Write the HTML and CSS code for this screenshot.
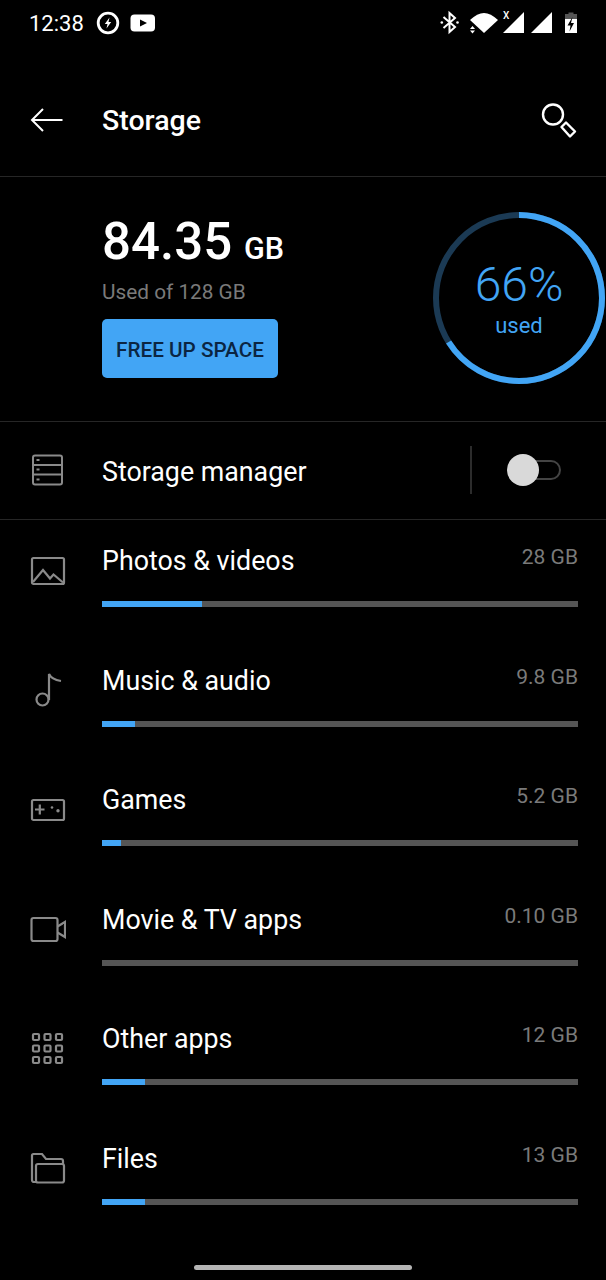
FILE: index.html
```html
<!DOCTYPE html>
<html lang="en">
<head>
    <meta charset="UTF-8">
    <meta name="viewport" content="width=device-width, initial-scale=1.0">
    <title>Storage</title>
    <link rel="stylesheet" href="styles.css">
</head>
<body>
    <div class="screen">
        <div class="statusbar">
            <div class="status-left">
                <span class="clock">12:38</span>
                <svg class="sicon" width="24" height="24" viewBox="0 0 24 24">
                    <circle cx="12" cy="12" r="9.800" fill="none" stroke="#fff" stroke-width="2.800"/>
                    <path d="M13.500 6.500 8.800 13h2.700l-1 4.500 4.700-6.500h-2.700z" fill="#fff"/>
                </svg>
                <svg class="sicon" width="26" height="18" viewBox="0 0 26 18">
                    <rect x="0.500" y="0.500" width="24.500" height="17" rx="4" fill="#fff"/>
                    <path d="M10 5.500 17 9l-7 3.500z" fill="#000"/>
                </svg>
            </div>
            <div class="status-right">
                <svg width="140" height="46" viewBox="0 0 140 46">
                    <path d="M3.500 17 15 27l-5.500 5V13l5.500 5L3.500 28" fill="none" stroke="#fff" stroke-width="2"/>
                    <circle cx="1.800" cy="22.500" r="1.300" fill="#fff"/>
                    <circle cx="17.500" cy="22.500" r="1.300" fill="#fff"/>
                    <path d="M30 20C35 15.500 39.500 13 44 13S53 15.500 58 20L44 33z" fill="#fff"/>
                    <path d="M30 29l2.500 -3 2.500 3zM30 30.500l2.500 3 2.500-3z" fill="#fff"/>
                    <path d="M63 33 84 12v21z" fill="#fff"/>
                    <path d="M91 33 112 12v21z" fill="#fff"/>
                    <rect x="125" y="14" width="12" height="19" fill="#fff"/>
                    <rect x="125" y="14" width="12" height="5" fill="#555"/>
                    <rect x="128.500" y="12.500" width="5" height="2" fill="#555"/>
                    <path d="M132.500 17 127.500 25.500h3l-1 6 4.500-8.500h-3l1.500-6z" fill="#000"/>
                </svg>
                <span class="mobile-x">X</span>
            </div>
        </div>

        <div class="toolbar">
            <svg class="back" width="34" height="26" viewBox="0 0 34 26">
                <path d="M32.500 13H2M13 2 2 13l11 11" fill="none" stroke="#fff" stroke-width="2"/>
            </svg>
            <h1 class="title">Storage</h1>
            <svg class="search" width="36" height="36" viewBox="0 0 36 36">
                <circle cx="12" cy="11.500" r="10" fill="none" stroke="#fff" stroke-width="2.400"/>
                <path d="M20.500 24 25 19.500 34 28.500 29 33.500z" fill="none" stroke="#fff" stroke-width="2.400" stroke-linejoin="round"/>
            </svg>
        </div>

        <div class="summary">
            <div class="summary-text">
                <div class="used"><span class="used-num">84.35</span> <span class="used-unit">GB</span></div>
                <div class="used-of">Used of 128 GB</div>
                <div class="free-btn">FREE UP SPACE</div>
            </div>
            <div class="ring">
                <svg width="174" height="174" viewBox="0 0 174 174">
                    <circle cx="87" cy="87" r="83" fill="none" stroke="#1b3a54" stroke-width="6"/>
                    <circle cx="87" cy="87" r="83" fill="none" stroke="#42a5f5" stroke-width="6" stroke-dasharray="344.200 521.500" transform="rotate(-90 87 87)"/>
                </svg>
                <div class="ring-label">
                    <div class="pct">66%</div>
                    <div class="pct-used">used</div>
                </div>
            </div>
        </div>

        <div class="manager">
            <svg class="icon" width="36" height="36" viewBox="0 0 36 36">
                <rect x="3" y="3.500" width="29" height="29" rx="2" fill="none" stroke="#8a8a8a" stroke-width="2"/>
                <path d="M3 13h29M3 22.500h29" stroke="#8a8a8a" stroke-width="2"/>
                <path d="M6.500 8h3M6.500 17.500h3M6.500 27.500h3" stroke="#8a8a8a" stroke-width="2"/>
            </svg>
            <span class="manager-label">Storage manager</span>
            <div class="switch-wrap">
                <div class="switch"><div class="knob"></div></div>
            </div>
        </div>

        <div class="row">
            <svg class="icon" width="36" height="36" viewBox="0 0 36 36">
                <rect x="2" y="5" width="32" height="26" rx="1.500" fill="none" stroke="#8a8a8a" stroke-width="2.200"/>
                <path d="M3 29 13 17l7 8.500 3.500-4 9.500 8" fill="none" stroke="#8a8a8a" stroke-width="2.200"/>
            </svg>
            <div class="row-main">
                <div class="row-head"><span class="row-name">Photos &amp; videos</span><span class="row-size">28 GB</span></div>
                <div class="bar"><div class="bar-fill" style="width: 100px"></div></div>
            </div>
        </div>

        <div class="row">
            <svg class="icon" width="36" height="36" viewBox="0 0 36 36">
                <circle cx="12.500" cy="26.500" r="6" fill="none" stroke="#8a8a8a" stroke-width="2.200"/>
                <path d="M19 27V1C20.500 4.500 25 7 31 8" fill="none" stroke="#8a8a8a" stroke-width="2.200"/>
            </svg>
            <div class="row-main">
                <div class="row-head"><span class="row-name">Music &amp; audio</span><span class="row-size">9.8 GB</span></div>
                <div class="bar"><div class="bar-fill" style="width: 33px"></div></div>
            </div>
        </div>

        <div class="row">
            <svg class="icon" width="36" height="36" viewBox="0 0 36 36">
                <rect x="2" y="8" width="32" height="20" rx="1.500" fill="none" stroke="#8a8a8a" stroke-width="2.200"/>
                <path d="M5 17.500h9.500M9.800 12.500v10" stroke="#8a8a8a" stroke-width="2.200"/>
                <circle cx="22" cy="15.500" r="1.300" fill="#8a8a8a"/>
                <circle cx="28" cy="18.700" r="1.700" fill="#8a8a8a"/>
            </svg>
            <div class="row-main">
                <div class="row-head"><span class="row-name">Games</span><span class="row-size">5.2 GB</span></div>
                <div class="bar"><div class="bar-fill" style="width: 19px"></div></div>
            </div>
        </div>

        <div class="row">
            <svg class="icon" width="36" height="36" viewBox="0 0 36 36">
                <rect x="1.500" y="6" width="26" height="23" rx="2" fill="none" stroke="#8a8a8a" stroke-width="2.200"/>
                <path d="M27.500 14.500 35 10v15l-7.500-4.500" fill="none" stroke="#8a8a8a" stroke-width="2.200"/>
            </svg>
            <div class="row-main">
                <div class="row-head"><span class="row-name">Movie &amp; TV apps</span><span class="row-size">0.10 GB</span></div>
                <div class="bar"></div>
            </div>
        </div>

        <div class="row">
            <svg class="icon" width="36" height="36" viewBox="0 0 36 36">
                <g fill="none" stroke="#8a8a8a" stroke-width="2.200">
                    <rect x="3" y="3" width="6" height="6" rx="1"/><rect x="14.500" y="3" width="6" height="6" rx="1"/><rect x="26" y="3" width="6" height="6" rx="1"/>
                    <rect x="3" y="14.500" width="6" height="6" rx="1"/><rect x="14.500" y="14.500" width="6" height="6" rx="1"/><rect x="26" y="14.500" width="6" height="6" rx="1"/>
                    <rect x="3" y="26" width="6" height="6" rx="1"/><rect x="14.500" y="26" width="6" height="6" rx="1"/><rect x="26" y="26" width="6" height="6" rx="1"/>
                </g>
            </svg>
            <div class="row-main">
                <div class="row-head"><span class="row-name">Other apps</span><span class="row-size">12 GB</span></div>
                <div class="bar"><div class="bar-fill" style="width: 43px"></div></div>
            </div>
        </div>

        <div class="row">
            <svg class="icon" width="36" height="36" viewBox="0 0 36 36">
                <path d="M6 31H4a2 2 0 0 1-2-2V4.500A1.500 1.500 0 0 1 3.500 3H12l4 5h15a2 2 0 0 1 2 2v3" fill="none" stroke="#8a8a8a" stroke-width="2.200"/>
                <rect x="6" y="13" width="28" height="18.500" rx="2" fill="none" stroke="#8a8a8a" stroke-width="2.200"/>
            </svg>
            <div class="row-main">
                <div class="row-head"><span class="row-name">Files</span><span class="row-size">13 GB</span></div>
                <div class="bar"><div class="bar-fill" style="width: 43px"></div></div>
            </div>
        </div>

        <div class="home-bar"></div>
    </div>
</body>
</html>
```

FILE: styles.css
```css
body {
    margin: 0;
    background: #000;
    font-family: Roboto, "Liberation Sans", sans-serif;
    color: #fff;
}
.screen {
    position: relative;
    width: 606px;
    height: 1280px;
    overflow: hidden;
    background: #000;
}
.statusbar {
    height: 46px;
    display: flex;
    justify-content: space-between;
    align-items: center;
    padding: 0 0 0 29px;
}
.status-left {
    display: flex;
    align-items: center;
    gap: 9px;
}
.clock {
    font-size: 22px;
    margin-right: 3px;
}
.sicon + .sicon {
    margin-left: 1px;
}
.status-right {
    position: relative;
    width: 166px;
    height: 46px;
}
.status-right svg {
    display: block;
}
.mobile-x {
    position: absolute;
    left: 63px;
    top: 10px;
    font-size: 10px;
    font-weight: 500;
}
.toolbar {
    height: 111px;
    border-bottom: 1px solid #262626;
    display: flex;
    align-items: center;
    padding: 19px 29px 0 30px;
}
.back {
    margin: 0 38px 2px 0;
}
.title {
    flex: 1;
    margin: 0;
    font-size: 28.5px;
    font-weight: 500;
}
.summary {
    height: 245px;
    border-bottom: 1px solid #262626;
    box-sizing: border-box;
    display: flex;
    justify-content: space-between;
    padding-left: 102px;
}
.summary-text {
    padding-top: 34px;
}
.used {
    height: 62px;
    line-height: 62px;
    white-space: nowrap;
}
.used-num {
    font-size: 51px;
    font-weight: 500;
}
.used-unit {
    font-size: 30.5px;
    font-weight: 500;
    margin-left: 8px;
}
.used-of {
    margin-top: 6px;
    font-size: 20.8px;
    line-height: 26px;
    color: #7a7a7a;
}
.free-btn {
    margin-top: 14px;
    width: 176px;
    height: 59px;
    line-height: 62px;
    background: #42a5f5;
    border-radius: 5px;
    text-align: center;
    color: #0b2542;
    font-size: 20.7px;
    font-weight: 500;
}
.ring {
    position: relative;
    width: 174px;
    height: 174px;
    margin-top: 34px;
}
.ring svg {
    display: block;
}
.ring-label {
    position: absolute;
    left: 0;
    top: 47px;
    width: 174px;
    text-align: center;
    color: #42a5f5;
}
.pct {
    font-size: 48px;
    font-weight: 300;
    line-height: 54px;
}
.pct-used {
    font-size: 22px;
    line-height: 28px;
}
.manager {
    height: 98px;
    border-bottom: 1px solid #262626;
    box-sizing: border-box;
    display: flex;
    align-items: center;
    padding: 0 0 1px 30px;
}
.icon {
    flex: none;
    display: block;
}
.manager-label {
    flex: 1;
    margin-left: 36px;
    padding-top: 3px;
    font-size: 26.8px;
}
.switch-wrap {
    width: 136px;
    height: 48px;
    box-sizing: border-box;
    border-left: 2px solid #2c2c2c;
    display: flex;
    align-items: center;
    padding-left: 35px;
}
.switch {
    position: relative;
    width: 54px;
    height: 20px;
    box-sizing: border-box;
    border: 2px solid #444;
    border-radius: 10px;
}
.knob {
    position: absolute;
    left: -2px;
    top: -8px;
    width: 32px;
    height: 32px;
    border-radius: 50%;
    background: #d9d9d9;
}
.row {
    height: 119.6px;
    box-sizing: border-box;
    display: flex;
    align-items: flex-start;
    padding: 24px 28px 0 30px;
}
.row .icon {
    margin-top: 9px;
}
.row-main {
    flex: 1;
    margin-left: 36px;
}
.row-head {
    display: flex;
    justify-content: space-between;
    align-items: flex-start;
    height: 34px;
}
.row-name {
    font-size: 26.8px;
    line-height: 35px;
}
.row-size {
    font-size: 21px;
    line-height: 26px;
    color: #7a7a7a;
}
.bar {
    margin-top: 23px;
    height: 6px;
    background: #555;
}
.bar-fill {
    height: 6px;
    background: #42a5f5;
}
.home-bar {
    position: absolute;
    left: 194px;
    bottom: 10px;
    width: 218px;
    height: 5px;
    border-radius: 3px;
    background: #b5b5b5;
}
```
